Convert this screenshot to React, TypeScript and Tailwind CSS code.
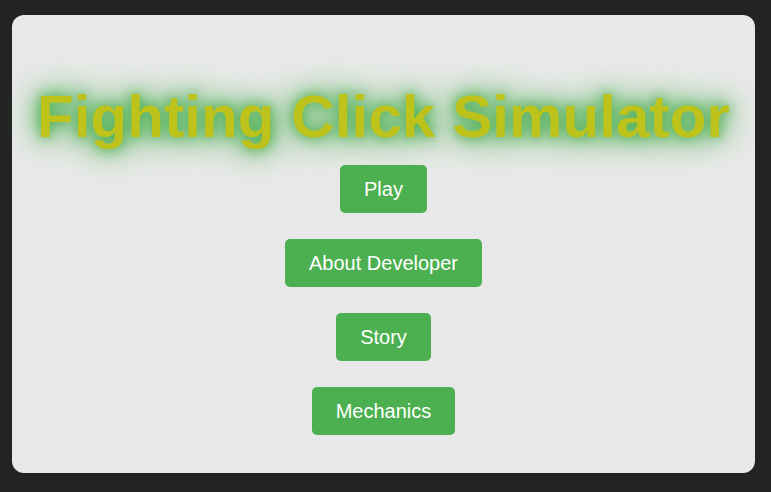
import React from "react";

export default function App() {
  const buttons = ["Play", "About Developer", "Story", "Mechanics"];
  return (
    <div className="w-[771px] h-[492px] bg-[#232323] pl-[12px] pt-[15px]" style={{ fontFamily: '"Liberation Sans", Arial, sans-serif' }}>
      <div className="w-[743px] h-[458px] bg-[#e8e8e8] rounded-[12px] flex flex-col items-center pt-[67px]">
        <h1
          className="text-[60px] font-bold leading-[69px] tracking-[0.12px] text-[#bec31c] whitespace-nowrap"
          style={{ textShadow: "0 0 12px #4caf50, 0 0 24px #4caf50, 0 0 36px #4caf50" }}
        >
          Fighting Click Simulator
        </h1>
        <div className="mt-[14px] flex flex-col items-center gap-[26px]">
          {buttons.map((b) => (
            <button
              key={b}
              className="h-12 px-6 bg-[#4caf50] text-white text-[20px] rounded-[5px] leading-none"
            >
              {b}
            </button>
          ))}
        </div>
      </div>
    </div>
  );
}
